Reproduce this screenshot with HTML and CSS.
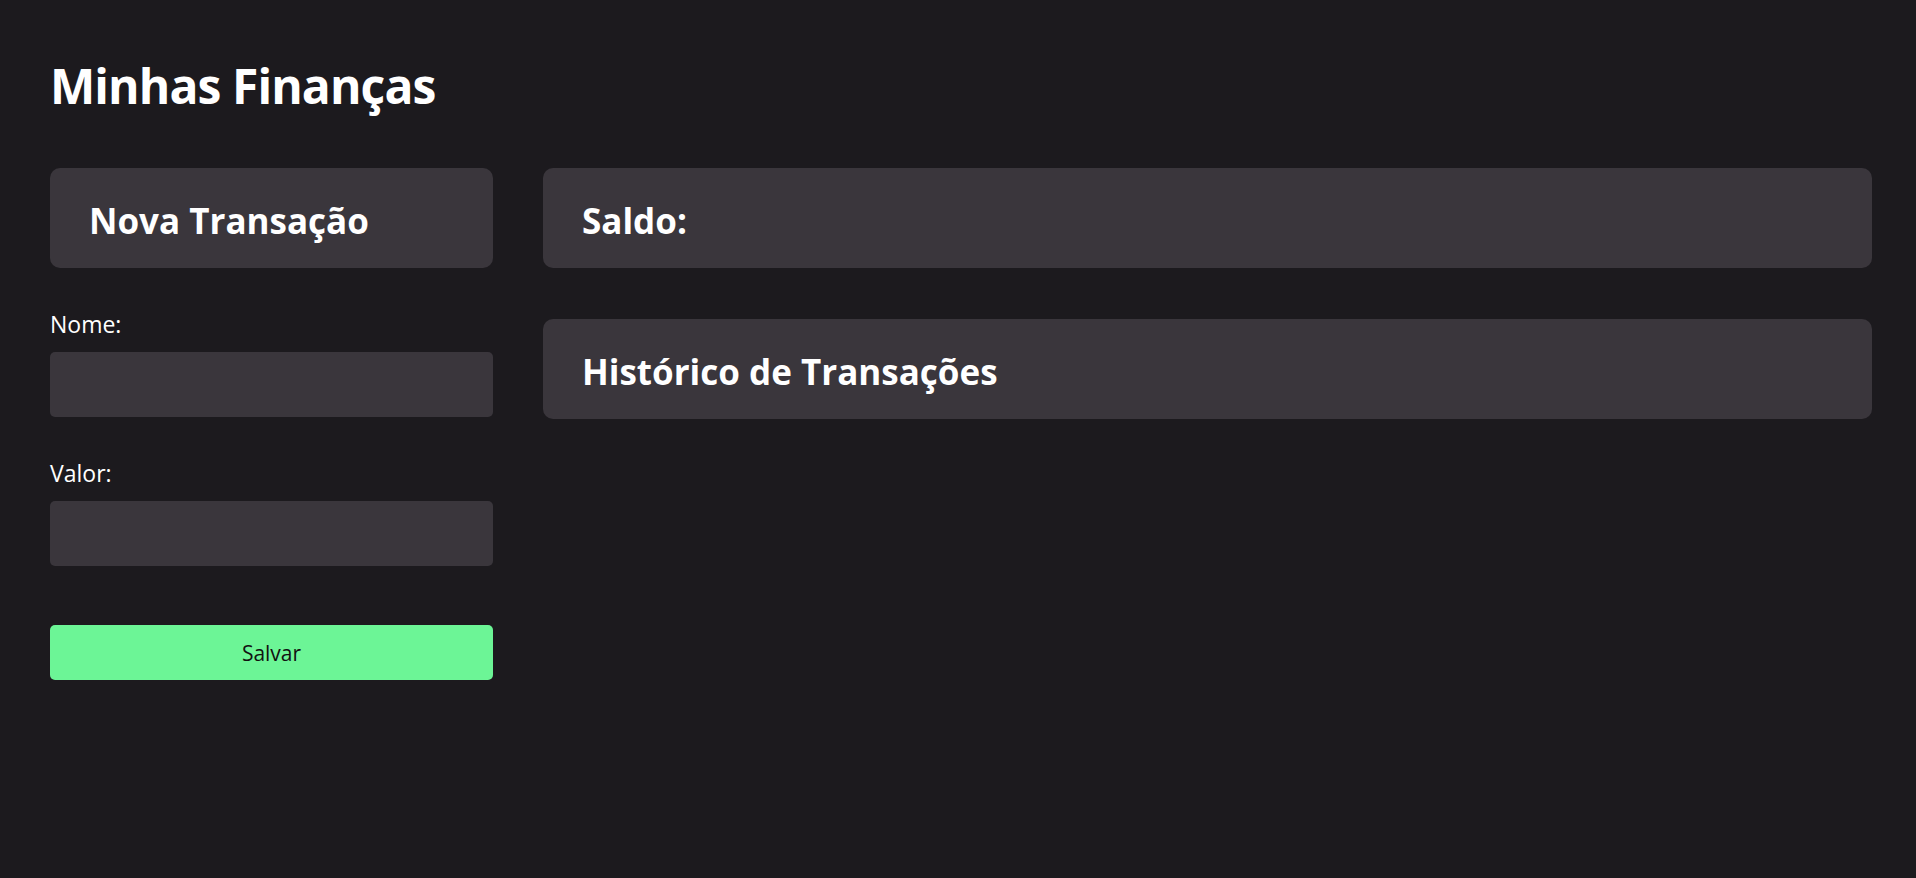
FILE: index.html
```html
<!DOCTYPE html>
<html lang="pt-BR">
<head>
<meta charset="utf-8">
<title>Minhas Finanças</title>
<link rel="stylesheet" href="styles.css">
</head>
<body>
<div class="app">
  <h1 class="title">Minhas Finanças</h1>
  <div class="layout">
    <section class="left">
      <div class="card"><h2 class="card-title">Nova Transação</h2></div>
      <form class="form">
        <label class="label" for="nome">Nome:</label>
        <input class="input" id="nome" type="text">
        <label class="label label-2" for="valor">Valor:</label>
        <input class="input" id="valor" type="text">
        <button class="button" type="button">Salvar</button>
      </form>
    </section>
    <section class="right">
      <div class="card"><h2 class="card-title">Saldo:</h2></div>
      <div class="card"><h2 class="card-title">Histórico de Transações</h2></div>
    </section>
  </div>
</div>
</body>
</html>
```
FILE: styles.css
```css
* { box-sizing: border-box; }
html, body { margin: 0; padding: 0; }
body {
  background: #1c1a1e;
  color: #ffffff;
  font-family: "Open Sans", "Noto Sans", sans-serif;
}
.app {
  padding: 56px 44px 0 50px;
}
.title {
  margin: 0;
  font-size: 48px;
  line-height: 60px;
  font-weight: 700;
  letter-spacing: -0.9px;
}
.layout {
  margin-top: 52px;
  display: grid;
  grid-template-columns: 1fr 3fr;
  gap: 50px;
  align-items: start;
}
.right {
  display: flex;
  flex-direction: column;
  gap: 51px;
}
.card {
  height: 100px;
  background: #3a363c;
  border-radius: 10px;
  padding: 5px 39px 0;
  display: flex;
  align-items: center;
}
.card-title {
  margin: 0;
  font-size: 35px;
  line-height: 36px;
  font-weight: 700;
  letter-spacing: 0;
}
.form {
  display: flex;
  flex-direction: column;
  margin-top: 44px;
}
.label {
  display: block;
  font-size: 23px;
  line-height: 24px;
  margin-bottom: 16px;
}
.label-2 { margin-top: 44px; }
.input {
  height: 65px;
  border: none;
  border-radius: 5px;
  background: #3a363c;
  color: #fff;
  font-size: 20px;
  padding: 0 12px;
  outline: none;
}
.button {
  margin-top: 59px;
  height: 55px;
  border: none;
  border-radius: 5px;
  background: #6cf596;
  color: #111111;
  font-family: "Open Sans", "Noto Sans", sans-serif;
  font-size: 21px;
  cursor: pointer;
}
```
